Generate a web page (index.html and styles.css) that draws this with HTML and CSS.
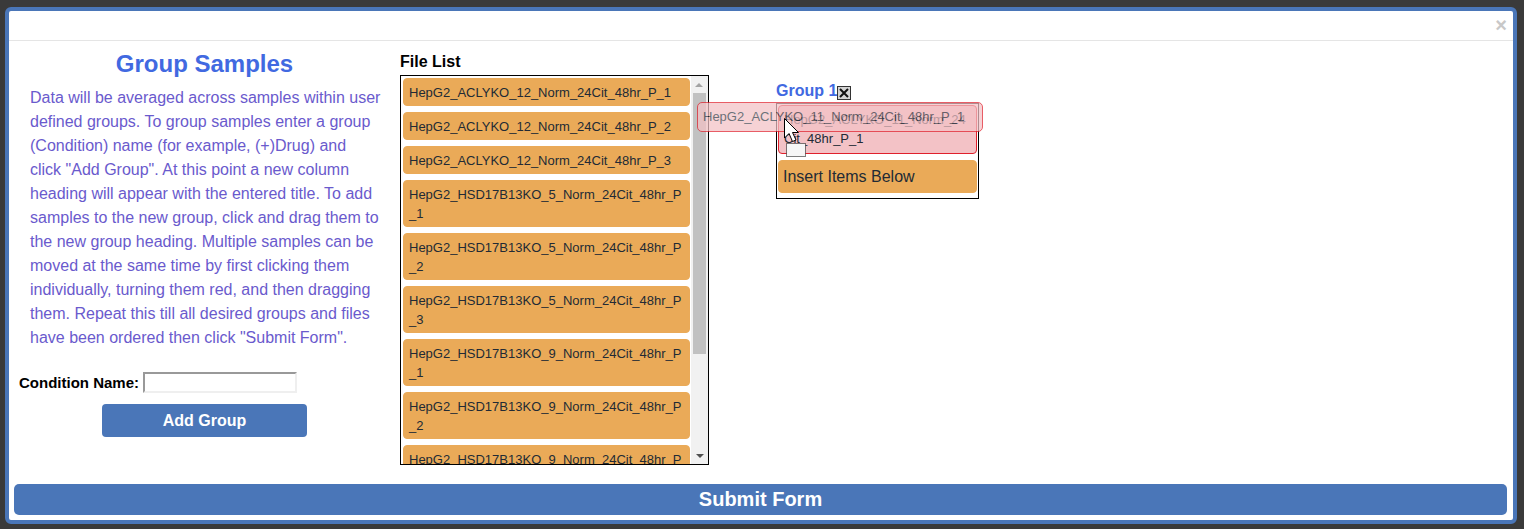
FILE: index.html
```html
<!DOCTYPE html>
<html>
<head>
<meta charset="utf-8">
<title>Group Samples</title>
<link rel="stylesheet" href="styles.css">
</head>
<body>
<div class="modal">
  <div class="modal-header"><span class="close">×</span></div>
  <div class="modal-body">
    <div class="col-left">
      <h2 class="title">Group Samples</h2>
      <p class="desc">Data will be averaged across samples within user defined groups. To group samples enter a group (Condition) name (for example, (+)Drug) and click "Add Group". At this point a new column heading will appear with the entered title. To add samples to the new group, click and drag them to the new group heading. Multiple samples can be moved at the same time by first clicking them individually, turning them red, and then dragging them. Repeat this till all desired groups and files have been ordered then click "Submit Form".</p>
      <div class="cond-row"><label class="cond-label">Condition Name:</label><input class="cond-input" type="text"></div>
      <button class="btn add-btn">Add Group</button>
    </div>
    <div class="col-files">
      <div class="list-label">File List</div>
      <div class="file-box">
        <div class="file-items">
          <div class="item">HepG2_ACLYKO_12_Norm_24Cit_48hr_P_1</div>
          <div class="item">HepG2_ACLYKO_12_Norm_24Cit_48hr_P_2</div>
          <div class="item">HepG2_ACLYKO_12_Norm_24Cit_48hr_P_3</div>
          <div class="item">HepG2_HSD17B13KO_5_Norm_24Cit_48hr_P_1</div>
          <div class="item">HepG2_HSD17B13KO_5_Norm_24Cit_48hr_P_2</div>
          <div class="item">HepG2_HSD17B13KO_5_Norm_24Cit_48hr_P_3</div>
          <div class="item">HepG2_HSD17B13KO_9_Norm_24Cit_48hr_P_1</div>
          <div class="item">HepG2_HSD17B13KO_9_Norm_24Cit_48hr_P_2</div>
          <div class="item">HepG2_HSD17B13KO_9_Norm_24Cit_48hr_P_3</div>
        </div>
        <div class="scrollbar">
          <div class="sb-btn"><span class="tri-up"></span></div>
          <div class="sb-track"><div class="sb-thumb"></div></div>
          <div class="sb-btn"><span class="tri-down"></span></div>
        </div>
      </div>
    </div>
    <div class="col-group">
      <div class="group-head">
        <span class="group-title">Group 1</span>
        <svg class="group-x" width="14" height="14" viewBox="0 0 14 14"><rect x="0.5" y="0.5" width="13" height="13" fill="#d4d4d4" stroke="#333"/><path d="M3 3 L11 11 M11 3 L3 11" stroke="#111" stroke-width="2"/></svg>
      </div>
      <div class="group-box">
        <div class="item selected">HepG2_ACLYKO_11_Norm_24Cit_48hr_P_1</div>
        <div class="item insert">Insert Items Below</div>
      </div>
    </div>
    <div class="drag-helper">HepG2_ACLYKO_11_Norm_24Cit_48hr_P_1</div>
    <svg class="cursor" width="24" height="40" viewBox="0 0 24 40">
      <rect x="2.5" y="25.5" width="19" height="13" fill="#f6f6f6" stroke="#000" stroke-width="1" stroke-dasharray="1 1"/>
      <path d="M0.5 0.5 L0.5 20 L5 15.5 L8.5 23.5 L12 22 L8.5 14.5 L14.5 14.5 Z" fill="#fff" stroke="#000" stroke-width="1" stroke-linejoin="miter"/>
    </svg>
  </div>
  <div class="modal-footer"><button class="btn submit-btn">Submit Form</button></div>
</div>
</body>
</html>
```

FILE: styles.css
```css
html, body {
  margin: 0;
  padding: 0;
}
body {
  background: #3a3a3a;
  font-family: "Liberation Sans", Arial, sans-serif;
  width: 1524px;
  height: 529px;
  overflow: hidden;
}
.modal {
  margin: 7px 7px 0 5px;
  border: 4px solid #4a76b8;
  border-radius: 6px;
  background: #fff;
  height: 509px;
  display: flex;
  flex-direction: column;
}
.modal-header {
  height: 29px;
  border-bottom: 1px solid #e5e5e5;
  display: flex;
  justify-content: flex-end;
  align-items: center;
  padding-right: 6px;
  flex: none;
}
.close {
  font-size: 20px;
  font-weight: bold;
  color: #c8c8c8;
  line-height: 1;
  margin-top: -2px;
}
.modal-body {
  position: relative;
  height: 443px;
  display: flex;
  flex-direction: row;
  align-items: flex-start;
  padding-left: 10px;
  flex: none;
}
.col-left {
  width: 371px;
  display: flex;
  flex-direction: column;
  padding-top: 9px;
}
.title {
  margin: 0 0 8px 0;
  font-size: 24px;
  line-height: 28px;
  font-weight: bold;
  color: #4169e1;
  text-align: center;
}
.desc {
  margin: 0 9px 0 11px;
  width: 351px;
  font-size: 16px;
  line-height: 24px;
  color: #6a5acd;
}
.cond-row {
  margin-top: 22px;
  display: flex;
  align-items: center;
  gap: 4px;
  height: 21px;
}
.cond-label {
  font-size: 15px;
  font-weight: bold;
  color: #000;
}
.cond-input {
  box-sizing: border-box;
  width: 154px;
  height: 21px;
  margin: 0;
  padding: 0 2px;
  border-width: 2px;
  border-style: solid;
  border-color: #999 #efefef #efefef #999;
  background: #fff;
  font-family: "Liberation Sans", Arial, sans-serif;
}
.btn {
  border: none;
  background: #4a76b8;
  color: #fff;
  font-family: "Liberation Sans", Arial, sans-serif;
  font-weight: bold;
  cursor: pointer;
  padding: 0;
}
.add-btn {
  margin-top: 11px;
  align-self: center;
  width: 205px;
  height: 33px;
  border-radius: 4px;
  font-size: 16px;
}
.col-files {
  margin-left: 10px;
  width: 309px;
  padding-top: 12px;
}
.list-label {
  font-size: 16px;
  line-height: 18px;
  font-weight: bold;
  color: #000;
  margin-bottom: 4px;
}
.file-box {
  box-sizing: border-box;
  width: 309px;
  height: 390px;
  border: 1px solid #000;
  display: flex;
  flex-direction: row;
}
.file-items {
  flex: 1;
  overflow: hidden;
  padding: 2px 1px 0 2px;
  display: flex;
  flex-direction: column;
  gap: 6px;
}
.item {
  flex: none;
  background: #eaaa58;
  border: 1px solid #eaaa58;
  border-radius: 4px;
  padding: 4px 5px 3px 5px;
  font-size: 13px;
  line-height: 19px;
  color: #222a35;
  word-break: break-all;
}
.scrollbar {
  width: 17px;
  flex: none;
  background: #f1f1f1;
  display: flex;
  flex-direction: column;
}
.sb-btn {
  height: 17px;
  display: flex;
  align-items: center;
  justify-content: center;
  flex: none;
}
.tri-up {
  width: 0;
  height: 0;
  border-left: 4px solid transparent;
  border-right: 4px solid transparent;
  border-bottom: 4px solid #a3a3a3;
  margin-left: -1px;
}
.tri-down {
  width: 0;
  height: 0;
  border-left: 4px solid transparent;
  border-right: 4px solid transparent;
  border-top: 4px solid #505050;
}
.sb-track {
  flex: 1;
  padding: 0 2px;
}
.sb-thumb {
  height: 261px;
  background: #c1c1c1;
}
.col-group {
  margin-left: 67px;
  padding-top: 41px;
  width: 203px;
}
.group-head {
  display: flex;
  align-items: flex-end;
  height: 18px;
  margin-bottom: 3px;
}
.group-title {
  font-size: 16px;
  line-height: 18px;
  font-weight: bold;
  color: #4169e1;
}
.group-x {
  display: block;
  margin-bottom: 0;
}
.group-box {
  box-sizing: border-box;
  width: 203px;
  border: 1px solid #000;
  padding: 1px 1px 5px 1px;
  display: flex;
  flex-direction: column;
  gap: 6px;
}
.item.selected {
  background: #f3c2c6;
  border-color: #e0202c;
  padding: 4px 5px 5px 5px;
}
.item.insert {
  font-size: 16px;
  padding: 6px 4px 6px 4px;
  line-height: 19px;
}
.drag-helper {
  position: absolute;
  left: 688px;
  top: 61px;
  box-sizing: border-box;
  width: 286px;
  height: 30px;
  padding: 4px 5px;
  background: #f3c2c6;
  border: 1px solid #e0202c;
  border-radius: 5px;
  font-size: 13px;
  line-height: 19px;
  color: #333a45;
  opacity: 0.72;
  white-space: nowrap;
}
.cursor {
  position: absolute;
  left: 775px;
  top: 77px;
}
.modal-footer {
  flex: none;
  padding: 0 6px 5px 5px;
}
.submit-btn {
  display: block;
  width: 100%;
  height: 31px;
  border-radius: 5px;
  font-size: 20px;
}
```
